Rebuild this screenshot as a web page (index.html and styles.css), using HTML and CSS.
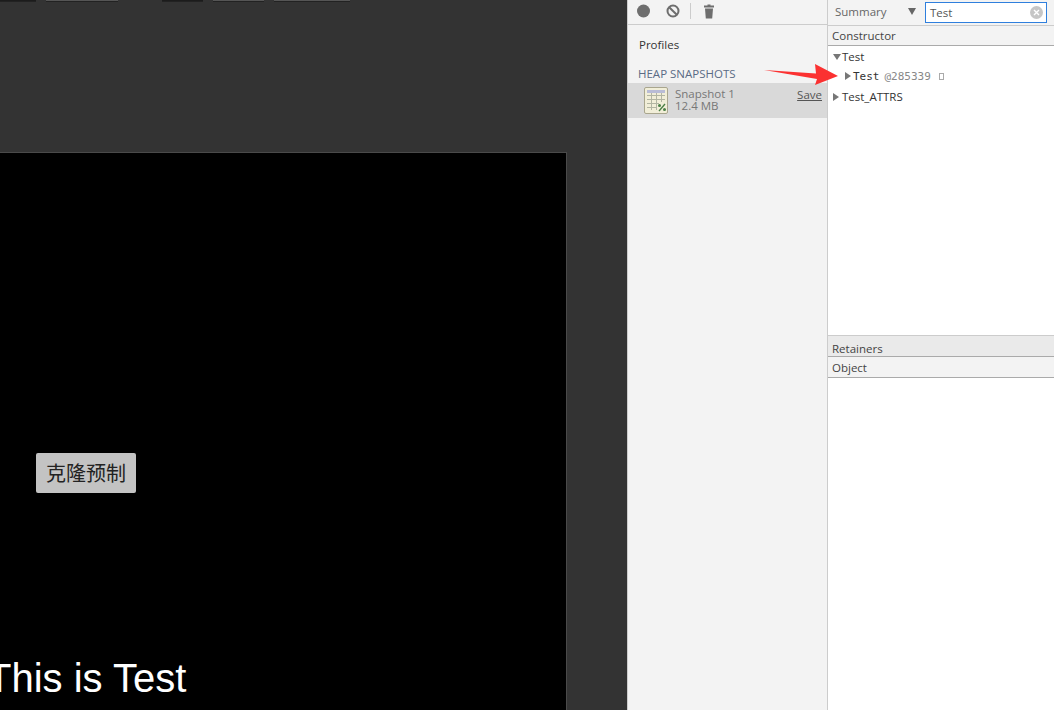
FILE: index.html
```html
<!DOCTYPE html>
<html lang="zh">
<head>
<meta charset="utf-8">
<title>Heap snapshot</title>
<link rel="stylesheet" href="styles.css">
</head>
<body>
<div class="app">
  <section class="editor">
    <div class="toolbar">
      <span class="tool tool-dark tool-a"></span>
      <span class="tool tool-b"></span>
      <span class="tool tool-dark tool-c"></span>
      <span class="tool tool-d"></span>
      <span class="tool tool-e"></span>
    </div>
    <div class="canvas">
      <button class="clone-btn">克隆预制</button>
      <div class="canvas-title">This is Test</div>
    </div>
  </section>
  <aside class="profiles">
    <div class="prof-toolbar">
      <svg class="ico" width="14" height="14" viewBox="0 0 14 14"><circle cx="6.500" cy="7" r="6.500" fill="#6e6e6e"/></svg>
      <svg class="ico ico-clear" width="14" height="14" viewBox="0 0 14 14"><circle cx="7" cy="7" r="5.500" fill="none" stroke="#6e6e6e" stroke-width="2"/><path d="M3.200 3.200l7.600 7.600" stroke="#6e6e6e" stroke-width="2"/></svg>
      <span class="sep"></span>
      <svg class="ico ico-trash" width="12" height="15" viewBox="0 0 12 15"><path d="M4.500 .5h3v1H11v2H1v-2h3.500zM2 4.500h8l-.8 10H2.800z" fill="#6e6e6e"/></svg>
    </div>
    <div class="prof-title">Profiles</div>
    <div class="prof-head">HEAP SNAPSHOTS</div>
    <div class="snap">
      <svg class="snap-ico" width="24" height="27" viewBox="0 0 24 27">
        <rect x=".5" y=".5" width="23" height="26" rx="1.500" fill="#f1eed8" stroke="#a9a68e"/>
        <rect x="3" y="3" width="18" height="3" fill="#b9bcd6"/>
        <path d="M3 8.500h18M3 12.500h18M3 16.500h12M3 20.500h9M7.500 6v17M12.500 6v17M17.500 6v9" stroke="#b2b5a2" fill="none"/>
        <path d="M15 24l6-7" stroke="#4a7f45" stroke-width="1.300"/>
        <circle cx="15.500" cy="18.500" r="1.500" fill="#4a7f45"/><circle cx="20.500" cy="22.500" r="1.500" fill="#4a7f45"/>
      </svg>
      <div class="snap-text"><div>Snapshot 1</div><div>12.4 MB</div></div>
      <span class="snap-save">Save</span>
    </div>
  </aside>
  <main class="heap">
    <div class="heap-toolbar">
      <span class="summary">Summary</span>
      <span class="dropdown"></span>
      <div class="filter">
        <span>Test</span>
        <svg class="filter-x" width="13" height="13" viewBox="0 0 13 13"><circle cx="6.500" cy="6.500" r="6.500" fill="#c6c6c6"/><path d="M4 4l5 5M9 4l-5 5" stroke="#fff" stroke-width="1.400"/></svg>
      </div>
    </div>
    <div class="col-head">Constructor</div>
    <div class="tree">
      <div class="row"><span class="tri-down"></span>Test</div>
      <div class="row row-child"><span class="tri-right"></span><span class="mono">Test</span><span class="obj-id">@285339</span><span class="box"></span></div>
      <div class="row"><span class="tri-right"></span>Test_ATTRS</div>
    </div>
    <div class="ret-head">Retainers</div>
    <div class="col-head obj-head">Object</div>
    <div class="empty"></div>
  </main>
</div>
<svg class="arrow" width="78" height="28" viewBox="0 0 78 28"><path d="M1 8L53 11.500 52 2 75 14 52 23 54 17z" fill="#fb3131"/></svg>
</body>
</html>
```
FILE: styles.css
```css
* { box-sizing: border-box; }
html, body { margin: 0; height: 100%; overflow: hidden; }
body { font-family: "Open Sans", "Noto Sans", sans-serif; font-size: 12px; color: #333; background: #fff; }
.app { display: flex; height: 710px; }

.editor { width: 627px; flex: none; background: #333; overflow: hidden; }
.toolbar { display: flex; height: 152px; align-items: flex-start; }
.tool { display: block; height: 1px; background: #555; box-shadow: 0 1px 0 #222; }
.tool-dark { background: #1c1c1c; }
.tool-a { width: 36px; }
.tool-b { width: 72px; margin-left: 10px; }
.tool-c { width: 41px; margin-left: 44px; }
.tool-d { width: 51px; margin-left: 10px; }
.tool-e { width: 76px; margin-left: 10px; }

.canvas { width: 567px; height: 558px; background: #000; border: solid #4a4a4a; border-width: 1px 1px 0 0; display: flex; flex-direction: column; align-items: flex-start; padding: 300px 0 0 36px; }
.clone-btn { width: 100px; height: 40px; padding: 0 0 2px; background: #c3c3c3; color: #222; border: 0; border-radius: 2px; font: 20px "Noto Sans CJK SC", sans-serif; }
.canvas-title { margin: 155px 0 0 -49px; color: #fff; font: 40px/60px "Liberation Sans", Arial, sans-serif; white-space: nowrap; }

.profiles { width: 201px; flex: none; background: #f3f3f3; border-left: 1px solid #ccc; border-right: 1px solid #ccc; }
.prof-toolbar { height: 25px; border-bottom: 1px solid #ccc; display: flex; align-items: center; padding: 0 0 2px 9px; }
.ico-clear { margin-left: 15px; }
.sep { width: 1px; height: 16px; background: #ccc; margin: 0 12px 0 10px; }
.prof-title { height: 36px; padding: 12px 0 0 11px; font-size: 11.500px; line-height: 16px; color: #333; }
.prof-head { height: 22px; padding: 5px 0 0 10px; font-size: 11.500px; line-height: 16px; color: #5a6b85; }
.snap { height: 35px; background: #d9d9d9; display: flex; align-items: center; padding: 0 5px 0 16px; }
.snap-ico { flex: none; }
.snap-text { margin-left: 7px; flex: 1; font-size: 11.500px; line-height: 12px; color: #777; padding-bottom: 1px; }
.snap-save { font-size: 11.500px; color: #555; text-decoration: underline; align-self: flex-start; margin-top: 4px; }

.heap { flex: 1; min-width: 0; display: flex; flex-direction: column; }
.heap-toolbar { height: 25px; display: flex; align-items: center; background: #f3f3f3; padding: 0 0 2px 7px; }
.summary { font-size: 11.500px; color: #666; width: 73px; }
.dropdown { width: 0; height: 0; flex: none; border-style: solid; border-color: #666 transparent transparent; border-width: 7px 4px 0; margin-right: 9px; }
.filter { width: 122px; height: 21px; margin-top: 1px; background: #fff; border: 1px solid #2f7fdd; display: flex; align-items: center; justify-content: space-between; padding: 0 3px 0 4px; font-size: 11.500px; color: #555; }
.col-head { height: 21px; background: #f3f3f3; border-top: 1px solid #ccc; border-bottom: 1px solid #aaa; padding: 1px 0 0 4px; line-height: 17px; font-size: 11.500px; color: #444; }
.tree { height: 289px; padding: 1px 0 0 5px; }
.row { height: 20px; line-height: 20px; font-size: 11.500px; color: #333; display: flex; align-items: center; white-space: nowrap; }
.row-child { padding-left: 12px; margin: -1px 0 1px; }
.tri-down, .tri-right { display: inline-block; width: 0; height: 0; border-style: solid; border-color: transparent; flex: none; }
.tri-down { border-width: 6px 4px 0; border-top-color: #777; margin-right: 1px; }
.tri-right { border-width: 4px 0 4px 6px; border-left-color: #777; margin-right: 3px; }
.row-child .tri-right { margin-right: 2px; }
.mono { font: 11px "DejaVu Sans Mono", "Liberation Mono", monospace; color: #333; }
.obj-id { font: 11px "DejaVu Sans Mono", "Liberation Mono", monospace; color: #888; margin-left: 5px; }
.box { width: 5px; height: 7px; border: 1px solid #aaa; margin-left: 8px; }
.ret-head { height: 21px; background: #eaeaea; border-top: 1px solid #ccc; padding: 4px 0 0 4px; line-height: 17px; font-size: 11.500px; color: #444; }
.obj-head { border-top: 1px solid #aaa; height: 22px; padding-top: 2px; }
.empty { flex: 1; background: #fff; }

.arrow { position: absolute; left: 763px; top: 62px; }
```
